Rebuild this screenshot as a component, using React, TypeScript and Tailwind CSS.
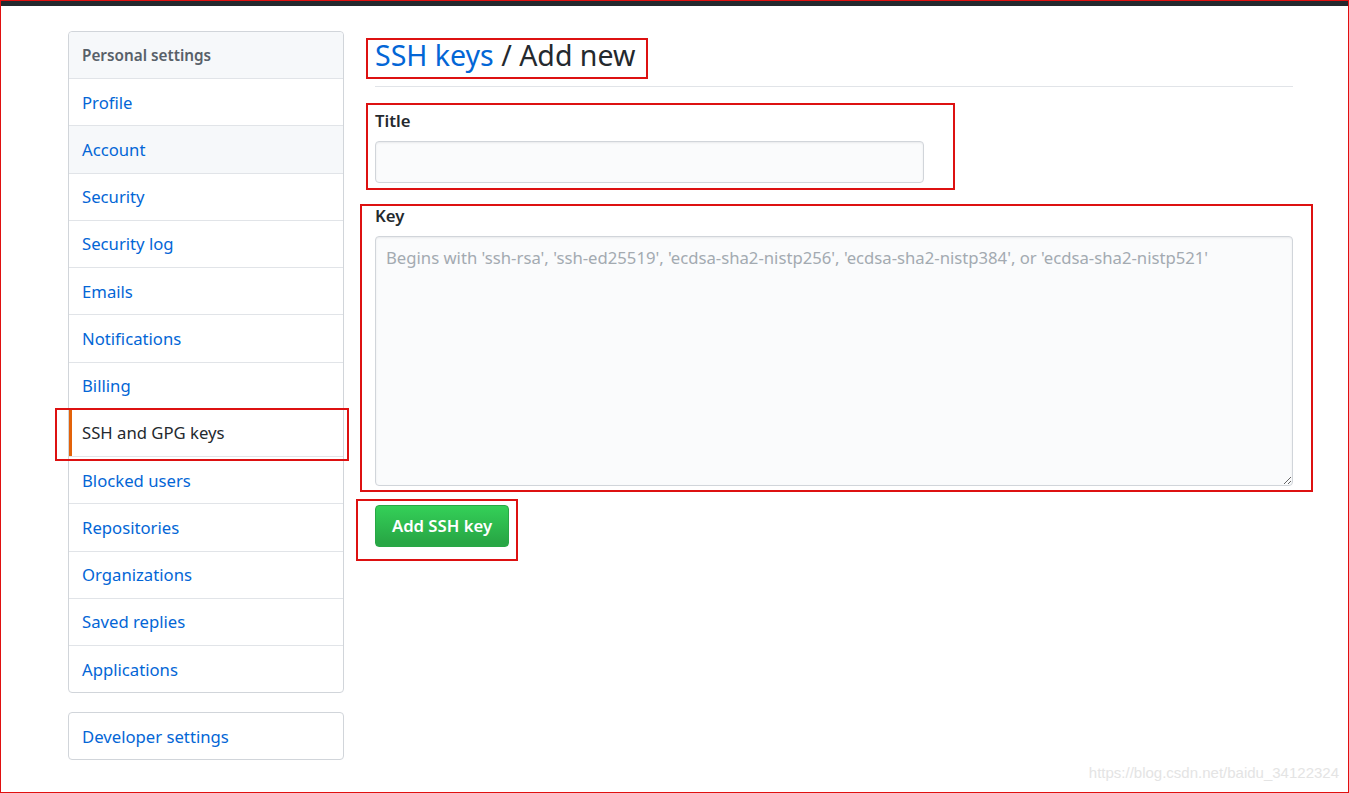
const personalItems = [
  "Profile",
  "Account",
  "Security",
  "Security log",
  "Emails",
  "Notifications",
  "Billing",
  "SSH and GPG keys",
  "Blocked users",
  "Repositories",
  "Organizations",
  "Saved replies",
  "Applications",
];

const font = "font-['Noto_Sans','Liberation_Sans',sans-serif]";

function SideItem({ label }: { label: string }) {
  const selected = label === "SSH and GPG keys";
  const hovered = label === "Account";
  return (
    <div
      className={
        "relative flex h-[47.25px] items-center border-t border-[#e1e4e8] pl-[13px] text-[16.7px] " +
        (selected
          ? "text-[#24292e] shadow-[inset_3px_0_0_#e36209]"
          : "text-[#0366d6]") +
        (hovered ? " bg-[#f6f8fa]" : "")
      }
    >
      {label}
      {selected && (
        <span className="pointer-events-none absolute -left-[14px] -top-[2px] h-[53px] w-[294px] border-2 border-[#dd1111]" />
      )}
    </div>
  );
}

export default function App() {
  return (
    <div
      className={
        "relative h-[793px] w-[1349px] overflow-hidden border border-[#e01010] bg-white " +
        font
      }
    >
      <div className="h-[5px] bg-[#24292e]" />

      <div className="flex gap-[31px] pl-[67px] pt-[25px]">
        <aside className="w-[276px] shrink-0">
          <nav className="rounded-[4px] border border-[#d1d5da]">
            <div className="flex h-[46px] items-center rounded-t-[4px] bg-[#f6f8fa] pl-[13px] text-[15.3px] font-semibold text-[#586069]">
              Personal settings
            </div>
            {personalItems.map((item) => (
              <SideItem key={item} label={item} />
            ))}
          </nav>
          <nav className="mt-[19px] rounded-[4px] border border-[#d1d5da]">
            <div className="flex h-[46px] items-center pl-[13px] text-[16.7px] text-[#0366d6]">
              Developer settings
            </div>
          </nav>
        </aside>

        <main className="relative w-[918px] pt-[4px]">
          <h1 className="border-b border-[#e1e4e8] pb-[11px] text-[28.5px] leading-[40px] text-[#24292e]">
            <span className="text-[#0366d6]">SSH keys</span> / Add new
          </h1>

          <form>
            <label className="mt-[21px] block text-[16.7px] font-semibold leading-[25px] text-[#24292e]">
              Title
            </label>
            <input
              type="text"
              className="mt-[8px] block h-[42px] w-[549px] rounded-[4px] border border-[#d1d5da] bg-[#fafbfc] px-[10px] text-[16.7px] shadow-[inset_0_1px_2px_rgba(27,31,35,0.075)] outline-none"
            />

            <label className="mt-[20px] block text-[16.7px] font-semibold leading-[25px] text-[#24292e]">
              Key
            </label>
            <textarea
              placeholder="Begins with 'ssh-rsa', 'ssh-ed25519', 'ecdsa-sha2-nistp256', 'ecdsa-sha2-nistp384', or 'ecdsa-sha2-nistp521'"
              className="mt-[8px] block h-[250px] w-[918px] rounded-[4px] border border-[#d1d5da] bg-[#fafbfc] px-[10px] py-[8px] text-[16.7px] shadow-[inset_0_1px_2px_rgba(27,31,35,0.075)] outline-none placeholder:text-[#a3aab1]"
            />

            <button
              type="button"
              className="mt-[19px] h-[42px] w-[134px] rounded-[4px] border border-[#28a745] bg-[linear-gradient(-180deg,#34d058_0%,#28a745_90%)] text-[16.7px] font-semibold text-white"
            >
              Add SSH key
            </button>
          </form>

          {/* red annotation boxes */}
          <span className="pointer-events-none absolute -left-[9px] top-[7px] h-[41px] w-[282px] border-2 border-[#dd1111]" />
          <span className="pointer-events-none absolute -left-[9px] top-[72px] h-[87px] w-[589px] border-2 border-[#dd1111]" />
          <span className="pointer-events-none absolute -left-[15px] top-[173px] h-[288px] w-[953px] border-2 border-[#dd1111]" />
          <span className="pointer-events-none absolute -left-[19px] top-[468px] h-[62px] w-[162px] border-2 border-[#dd1111]" />
        </main>
      </div>

      <div className="absolute bottom-[8px] right-[9px] font-['Liberation_Sans',sans-serif] text-[15px] text-[#e4e4e4]">
        https://blog.csdn.net/baidu_34122324
      </div>
    </div>
  );
}
